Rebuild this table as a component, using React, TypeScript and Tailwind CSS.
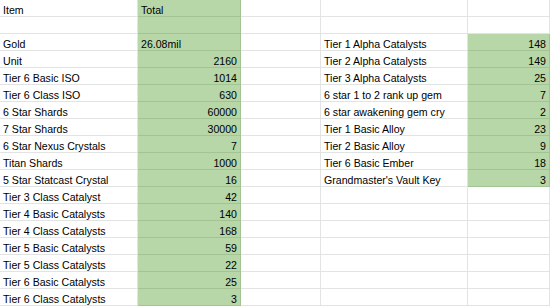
import React from "react";

const LEFT: [string, string][] = [
  ["Item", "Total"],
  ["", ""],
  ["Gold", "26.08mil"],
  ["Unit", "2160"],
  ["Tier 6 Basic ISO", "1014"],
  ["Tier 6 Class ISO", "630"],
  ["6 Star Shards", "60000"],
  ["7 Star Shards", "30000"],
  ["6 Star Nexus Crystals", "7"],
  ["Titan Shards", "1000"],
  ["5 Star Statcast Crystal", "16"],
  ["Tier 3 Class Catalyst", "42"],
  ["Tier 4 Basic Catalysts", "140"],
  ["Tier 4 Class Catalysts", "168"],
  ["Tier 5 Basic Catalysts", "59"],
  ["Tier 5 Class Catalysts", "22"],
  ["Tier 6 Basic Catalysts", "25"],
  ["Tier 6 Class Catalysts", "3"],
];

// right-hand block starts on the Gold row
const RIGHT: [string, string][] = [
  ["Tier 1 Alpha Catalysts", "148"],
  ["Tier 2 Alpha Catalysts", "149"],
  ["Tier 3 Alpha Catalysts", "25"],
  ["6 star 1 to 2 rank up gem", "7"],
  ["6 star awakening gem cry", "2"],
  ["Tier 1 Basic Alloy", "23"],
  ["Tier 2 Basic Alloy", "9"],
  ["Tier 6 Basic Ember", "18"],
  ["Grandmaster's Vault Key", "3"],
];

function Cell({
  w,
  green,
  right,
  children,
}: {
  w: string;
  green?: boolean;
  right?: boolean;
  children?: React.ReactNode;
}) {
  return (
    <div
      className={`${w} h-[17px] shrink-0 overflow-hidden whitespace-nowrap border-r border-b px-[3px] pt-[4px] text-[10.6px] leading-[12px] ${
        green ? "bg-[#b7d7a8] border-[#a3c393]" : "bg-white border-[#e2e3e3]"
      } ${right ? "text-right" : "text-left"}`}
    >
      {children}
    </div>
  );
}

export default function App() {
  return (
    <div
      className="w-[550px] h-[306px] overflow-hidden bg-white text-black"
      style={{ fontFamily: '"Liberation Sans", Arial, sans-serif' }}
    >
      {LEFT.map(([item, total], i) => {
        const r = i >= 2 ? RIGHT[i - 2] : undefined;
        const numeric = /^\d+$/.test(total);
        return (
          <div key={i} className="flex">
            <Cell w="w-[138px]">{item}</Cell>
            <Cell w="w-[103px]" green right={numeric}>
              {total}
            </Cell>
            <Cell w="w-[80px]" />
            <Cell w="w-[147px]">{r?.[0]}</Cell>
            <Cell w="w-[82px]" green={!!r} right>
              {r?.[1]}
            </Cell>
          </div>
        );
      })}
    </div>
  );
}
